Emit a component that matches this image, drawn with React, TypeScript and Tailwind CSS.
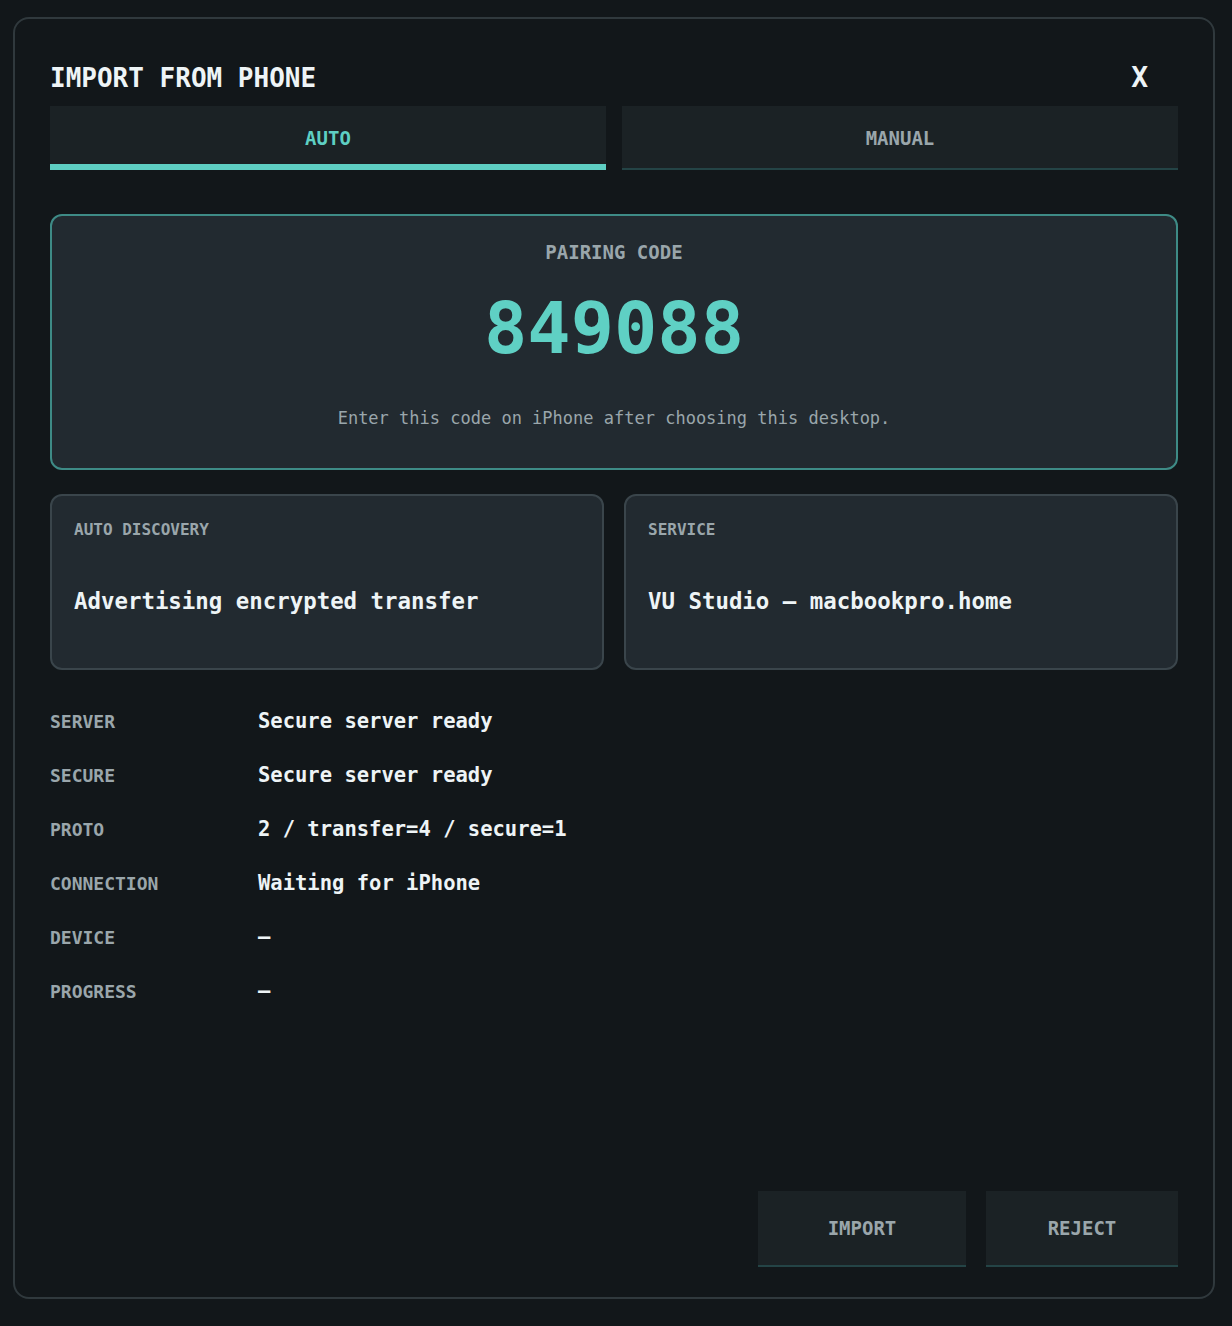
import React from 'react'

const mono = { fontFamily: '"DejaVu Sans Mono", "Liberation Mono", monospace' }

const rows: [string, string][] = [
    ['SERVER', 'Secure server ready'],
    ['SECURE', 'Secure server ready'],
    ['PROTO', '2 / transfer=4 / secure=1'],
    ['CONNECTION', 'Waiting for iPhone'],
    ['DEVICE', '–'],
    ['PROGRESS', '–'],
]

const InfoCard = ({ label, value }: { label: string; value: string }) => (
    <div className="flex-1 h-[176px] rounded-[12px] border-2 border-[#3a454b] bg-[#222a30] px-[22px] pt-[24px]">
        <div className="text-[16px] font-bold leading-[20px] text-[#9aa6ab]">{label}</div>
        <div className="mt-[47px] text-[22.4px] font-bold leading-[28px] text-[#eef4f6]">{value}</div>
    </div>
)

const App = () => {
    return (
        <div className="w-full h-[1326px] bg-[#12171a] pt-[17px] pl-[13px] pr-[17px]" style={mono}>
            <div className="h-[1282px] rounded-[16px] border-2 border-[#30393d] bg-[#12171a] px-[35px] pb-[30px] flex flex-col">
                <div className="flex items-center justify-between h-[87px] pt-[30px]">
                    <h1 className="text-[26px] font-bold leading-[30px] text-[#eef4f6]">IMPORT FROM PHONE</h1>
                    <button className="mr-[30px] text-[28px] font-bold leading-[30px] text-[#eef4f6]">X</button>
                </div>

                <div className="flex gap-[16px]">
                    <button className="flex-1 h-[64px] bg-[#1b2225] border-b-[6px] border-[#5ecfc3] pt-[6px] text-[19px] font-bold text-[#5ecfc3]">AUTO</button>
                    <button className="flex-1 h-[64px] bg-[#1b2225] border-b-2 border-[#244446] pt-[2px] text-[19px] font-bold text-[#9aa6ab]">MANUAL</button>
                </div>

                <div className="mt-[44px] h-[256px] rounded-[12px] border-2 border-[#3e8b86] bg-[#222a30] flex flex-col items-center pt-[24px]">
                    <div className="text-[19px] font-bold leading-[24px] text-[#9aa6ab]">PAIRING CODE</div>
                    <div className="mt-[19px] text-[72px] font-bold leading-[90px] text-[#5fd0c4]">849088</div>
                    <div className="mt-[33px] text-[17px] leading-[24px] text-[#9aa6ab]">Enter this code on iPhone after choosing this desktop.</div>
                </div>

                <div className="mt-[24px] flex gap-[20px]">
                    <InfoCard label="AUTO DISCOVERY" value="Advertising encrypted transfer" />
                    <InfoCard label="SERVICE" value="VU Studio — macbookpro.home" />
                </div>

                <div className="mt-[38px] flex flex-col gap-[28px]">
                    {rows.map(([k, v], i) => (
                        <div key={i} className="flex items-center h-[26px]">
                            <div className="w-[208px] text-[18px] font-bold text-[#9aa6ab]">{k}</div>
                            <div className="text-[20.5px] font-bold text-[#eef4f6]">{v}</div>
                        </div>
                    ))}
                </div>

                <div className="mt-auto flex justify-end gap-[20px]">
                    <button className="w-[208px] h-[76px] bg-[#1b2225] border-b-2 border-[#244446] text-[19px] font-bold text-[#9aa6ab]">IMPORT</button>
                    <button className="w-[192px] h-[76px] bg-[#1b2225] border-b-2 border-[#244446] text-[19px] font-bold text-[#9aa6ab]">REJECT</button>
                </div>
            </div>
        </div>
    )
}

export default App
